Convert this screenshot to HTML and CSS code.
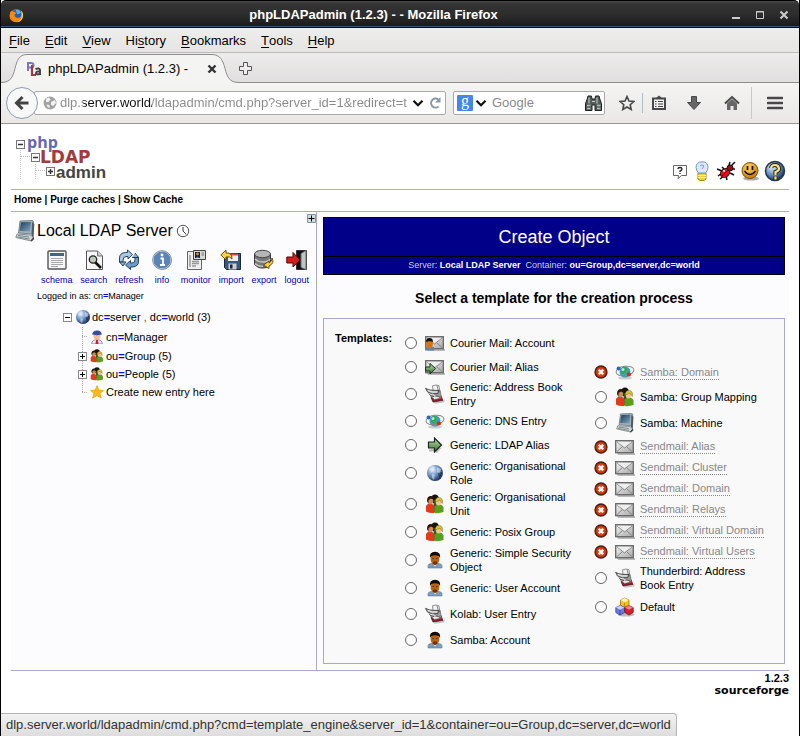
FILE: index.html
```html
<!DOCTYPE html>
<html lang="en">
<head>
<meta charset="utf-8">
<title>phpLDAPadmin (1.2.3) -</title>
<link rel="stylesheet" href="styles.css">
</head>
<body>
<svg class="sprite" aria-hidden="true">
  <defs>
    <linearGradient id="g-metal" x1="0" y1="0" x2="1" y2="1"><stop offset="0" stop-color="#f4f4f4"/><stop offset="1" stop-color="#a8a8a8"/></linearGradient>
    <linearGradient id="g-green" x1="0" y1="0" x2="0" y2="1"><stop offset="0" stop-color="#c4e0b0"/><stop offset="1" stop-color="#2f6e2c"/></linearGradient>
    <radialGradient id="g-globe" cx=".35" cy=".3" r=".75"><stop offset="0" stop-color="#e6f0fa"/><stop offset=".5" stop-color="#6d93c4"/><stop offset="1" stop-color="#172c52"/></radialGradient>
    <radialGradient id="g-red" cx=".5" cy=".5" r=".5"><stop offset="0" stop-color="#f06a3a"/><stop offset=".7" stop-color="#d8380c"/><stop offset="1" stop-color="#a82000"/></radialGradient>
    <linearGradient id="g-screen" x1="0" y1="0" x2="1" y2="1"><stop offset="0" stop-color="#1d3c58"/><stop offset="1" stop-color="#7fa6c4"/></linearGradient>
    <radialGradient id="g-smile" cx=".4" cy=".3" r=".7"><stop offset="0" stop-color="#ffd860"/><stop offset="1" stop-color="#c87c0c"/></radialGradient>
  </defs>
  <symbol id="i-mail" viewBox="0 0 20 16">
    <path d="M2 14h18v2H3z" fill="#bbb"/><rect x=".7" y="1.700" width="17.600" height="12" fill="url(#g-metal)" stroke="#666" stroke-width="1.300"/>
    <path d="M1.500 2.500l8 6.500 8-6.500M1.500 13l6-5.500M17.500 13l-6-5.500" fill="none" stroke="#888"/><path d="M2.500 3h14l-7 5z" fill="#eee"/>
  </symbol>
  <symbol id="i-person" viewBox="0 0 16 18">
    <path d="M1 17v-2.500q0-1.500 3-2h8q3 .5 3 2V17z" fill="#7c9aba" stroke="#5f7fa4" stroke-width=".6"/>
    <path d="M6 13h4l-2 2.500z" fill="#e8eef4"/><ellipse cx="8" cy="8" rx="4.400" ry="6" fill="#b8620e"/>
    <path d="M3 7Q2 1 8 .8 14 1 13 7L11.800 5Q8 3.500 4.200 5z" fill="#0c0c0c"/><path d="M6 11q2-1.500 4 0v2q-2 1.500-4 0z" fill="#6a3608"/><path d="M5.500 7.500h1.500M9 7.500h1.500" stroke="#5a2c04"/>
  </symbol>
  <symbol id="i-mailperson" viewBox="0 0 20 16"><use href="#i-mail" width="20" height="16"/><rect y="12" width="9" height="3.500" fill="#5d84b4"/><ellipse cx="4.500" cy="9" rx="3.300" ry="4.500" fill="#d8720e"/><path d="M1 7q0-4 3.500-4T8 7L4.500 6z" fill="#111"/></symbol>
  <symbol id="i-arrow" viewBox="0 0 16 16"><path d="M2 12.500v2h7v2l6-6z" fill="#bbb"/><path d="M1.500 5h6V1l7 7-7 7v-4h-6z" fill="url(#g-green)" stroke="#17251a" stroke-width="1.200"/></symbol>
  <symbol id="i-mailarrow" viewBox="0 0 20 16"><use href="#i-mail" width="20" height="16"/><path d="M.6 8H5V4.500l5.500 5L5 15v-3H.6z" fill="url(#g-green)" stroke="#17301a"/></symbol>
  <symbol id="i-book" viewBox="0 0 20 20">
    <path d="M8 18.500l9-1 3-2.500-1 3.500-9 1.200z" fill="#c4c4c4"/>
    <path d="M6 13.500l10-2 1.800 5L8 18z" fill="#8a2030" stroke="#3d0912" stroke-width=".7"/><path d="M5 11.500l8 1 3.500 1.500-7 1.500z" fill="#e8e8e8" stroke="#666" stroke-width=".6"/>
    <path d="M9 5.500l6 .5 1.500 8-7-3.500z" fill="#9c9c9c" stroke="#555" stroke-width=".6"/>
    <path d="M7.500 1.800q4-1.600 6.500 0l.8 6L8 6.500z" fill="#f2f2f2" stroke="#666" stroke-width=".7"/><path d="M12 1.500l1.500 6" stroke="#888"/>
    <path d="M.6 4.300q3 2 7.400 2l6 .2-1.200 3Q7 11 2.500 8z" fill="#b4b4b4" stroke="#333" stroke-width=".8"/><path d="M3 6.500q4 2.200 9 1.500" stroke="#eee" fill="none"/>
    <path d="M4 9.500q1 3 5 3" stroke="#444" fill="none"/><circle cx="15" cy="14" r="1.100" fill="#e33"/>
  </symbol>
  <symbol id="i-net" viewBox="0 0 20 16">
    <ellipse cx="10" cy="14" rx="7" ry="1.600" fill="#ccc"/><circle cx="10" cy="8" r="5.500" fill="#3b9fc2"/><path d="M6 5q2-3 5-2l1 3-2 3-3 1zM11 9l3-1v3l-2 2z" fill="#36a848"/><circle cx="8" cy="5.500" r="1.500" fill="#b4ecc8"/>
    <ellipse cx="10" cy="7" rx="9" ry="4.700" fill="none" stroke="#888" transform="rotate(-8 10 7)"/><circle cx="3.600" cy="4.500" r="2" fill="#2a5fcc"/><circle cx="14" cy="10.500" r="2" fill="#d42a1e"/>
  </symbol>
  <symbol id="i-globe" viewBox="0 0 18 18"><circle cx="9" cy="9" r="8" fill="url(#g-globe)"/><path d="M3 5l3-3 3 1-1 3-3 2zM6 10l3 1-1 5-2-2zM11 3l4 2-1 5-3-2z" fill="#e9f1f8" opacity=".5"/><path d="M12 9l4-1q0 4-3 6z" fill="#122548" opacity=".6"/></symbol>
  <symbol id="i-group" viewBox="0 0 20 20">
    <ellipse cx="10" cy="5" rx="4" ry="4.500" fill="#151515"/><path d="M9 6h4l2 12H8z" fill="#275d2c"/>
    <path d="M1 17.500V12q1-2.500 4-2.500T9.500 12v7q-5 .5-8.500-1.500z" fill="#e03b1c"/><ellipse cx="5.500" cy="6.500" rx="2.800" ry="3.700" fill="#d38a58"/><path d="M2 7Q2 2 6 2t3 4L6 4.500 3.500 6v4z" fill="#2a1408"/>
    <path d="M9.500 19v-6q1-2.500 4.500-2.500t4.500 3V18q-4 1.500-9 1z" fill="#5b9d1c"/><ellipse cx="13.500" cy="8" rx="2.700" ry="3.500" fill="#f2c58c"/><path d="M10.300 8q0-5 4-4.500t3 6L15 6z" fill="#dec53a" stroke="#76620e" stroke-width=".5"/>
  </symbol>
  <symbol id="i-computer" viewBox="0 0 20 22">
    <path d="M5 1l12-.5q1.500 0 1.500 1.500l-1 12-14-1z" fill="#a4b2b8" stroke="#566" stroke-width=".7"/><path d="M6 2.300l10-.3-1 9.500-10.500-.5z" fill="url(#g-screen)"/><path d="M17 2l2.300 2-.8 15-2-4z" fill="#4e5d62"/>
    <path d="M2 14l14 1 2.500 3-2 3L.8 17.500z" fill="#cfd6d6" stroke="#667" stroke-width=".7"/><path d="M3 15.500l11 1.500M2.500 17l12 2" stroke="#788"/><path d="M15.500 20.500l3-3.500.7 2-2.500 2.500z" fill="#444"/>
  </symbol>
  <symbol id="i-cubes" viewBox="0 0 20 20">
    <ellipse cx="11" cy="17.500" rx="8.500" ry="2" fill="#bbb"/><g stroke-width=".7"><path d="M9.500 1L14 3v5l-4.500 2.500L5.500 8V3z" fill="#f5c21e" stroke="#9a6c06"/><path d="M9.500 1L14 3 9.500 5.500 5.500 3z" fill="#fff3a8"/><path d="M9.500 5.500v5" stroke="#a77508"/>
    <path d="M5 8.500l4.500 2v5L5 18l-4.200-2.500v-5z" fill="#6b79e0" stroke="#2a3488"/><path d="M5 8.500l4.500 2L5 12.800l-4.200-2.300z" fill="#c8cefa"/><path d="M5 13v5" stroke="#2a3488"/>
    <path d="M14 8.500l4.200 2v5L14 18l-4.200-2.500v-5z" fill="#d4202c" stroke="#6e0a12"/><path d="M14 8.500l4.200 2-4.200 2.300-4.200-2.300z" fill="#f28288"/></g>
  </symbol>
  <symbol id="i-deny" viewBox="0 0 14 14"><circle cx="7" cy="7" r="6" fill="url(#g-red)" stroke="#4b2014" stroke-width="1.300"/><path d="M4.800 4.800l4.400 4.400m0-4.400L4.800 9.200" stroke="#fff" stroke-width="2.200"/></symbol>
  <symbol id="i-plus" viewBox="0 0 9 9"><rect x=".5" y=".5" width="8" height="8" fill="#fff" stroke="#888"/><path d="M2 4.500h5M4.500 2v5" stroke="#000"/></symbol>
  <symbol id="i-minus" viewBox="0 0 9 9"><rect x=".5" y=".5" width="8" height="8" fill="#fff" stroke="#888"/><path d="M2 4.500h5" stroke="#000"/></symbol>
</svg>

<header class="titlebar">
  <svg class="fox" viewBox="0 0 16 16" aria-hidden="true"><circle cx="8" cy="8" r="7" fill="#e8590c"/><circle cx="8.500" cy="6.500" r="5" fill="#1f62b4"/><path d="M7 2q4-1 6 3L9 7z" fill="#4fb4e8"/><path d="M1.500 4Q3 2.500 4.500 4q3-.5 3 1.500L6 7q0 4 4 3.500 3.500-.5 4-5 2 5-1.500 8T4 14 1.500 4z" fill="#f48a14"/><path d="M13 3q3 3 1.500 7T9 15q5-3 4.500-7z" fill="#ffd23c"/></svg>
  <h1 class="window-title">phpLDAPadmin (1.2.3) - - Mozilla Firefox</h1>
  <div class="window-buttons">
    <button type="button" aria-label="Minimise"><svg viewBox="0 0 10 10"><path d="M1 8h8" stroke="#ccc" stroke-width="2"/></svg></button>
    <button type="button" aria-label="Maximise"><svg viewBox="0 0 10 10"><path d="M1.500 1.500h7v7h-7zM1 2h8" fill="none" stroke="#ccc"/></svg></button>
    <button type="button" aria-label="Close"><svg viewBox="0 0 10 10"><path d="M1.500 1.500l7 7m0-7l-7 7" stroke="#ccc" stroke-width="2"/></svg></button>
  </div>
</header>

<nav class="menubar">
  <button type="button"><u>F</u>ile</button><button type="button"><u>E</u>dit</button><button type="button"><u>V</u>iew</button><button type="button">Hi<u>s</u>tory</button><button type="button"><u>B</u>ookmarks</button><button type="button"><u>T</u>ools</button><button type="button"><u>H</u>elp</button>
</nav>

<div class="tabs">
  <div class="tab">
    <svg class="tab-shape" viewBox="0 0 238 30" aria-hidden="true"><path d="M0 30v-.5c10 0 12-6 14-14S18 1.500 26 1.500h185c8 0 11 6 13 14s4 14 14 14v.5z" fill="#f4f4f3"/><path d="M0 29.500c10 0 12-6 14-14S18 1.500 26 1.500h185c8 0 11 6 13 14s4 14 14 14" fill="none" stroke="#8e8e8e"/></svg>
    <svg class="favicon" viewBox="0 0 16 16" aria-hidden="true"><path d="M2 10V2h3q2.500 0 2.500 2.200T5 6.500H2" fill="none" stroke="#77c" stroke-width="2"/><path d="M6 4v10h4" fill="none" stroke="#a33a3a" stroke-width="2.200"/><path d="M9.500 8q4-1.500 4.500 1v5M14 10.500q-4-.5-4 1.500t4 1" fill="none" stroke="#444" stroke-width="2"/></svg>
    <span class="tab-title">phpLDAPadmin (1.2.3) -</span>
    <button type="button" class="tab-close" aria-label="Close tab"><svg viewBox="0 0 10 10"><path d="M1.500 1.500l7 7m0-7l-7 7" stroke="#333" stroke-width="2.400"/></svg></button>
  </div>
  <button type="button" class="new-tab" aria-label="New tab"><svg viewBox="0 0 13 13"><path d="M4.500.5h4v4h4v4h-4v4h-4v-4h-4v-4h4z" fill="#eee" stroke="#555"/></svg></button>
</div>

<div class="toolbar">
  <button type="button" class="back" aria-label="Back"><svg viewBox="0 0 16 16"><path d="M14.500 8H3M8.500 2L2.500 8l6 6" fill="none" stroke="#444" stroke-width="3"/></svg></button>
  <div class="urlbar">
    <svg class="site" viewBox="0 0 14 14" aria-hidden="true"><circle cx="7" cy="7" r="6.500" fill="#a2a2a2"/><path d="M3 2.500l3-1 1.500 2-2 2.500L3 6zM8 6l4-2 1 3-3 3-2-1zM3.500 8.500l3 .5v3l-2-1z" fill="#f2f2f2"/></svg>
    <input class="address" type="text" aria-label="Address" value="dlp.server.world/ldapadmin/cmd.php?server_id=1&amp;redirect=t">
    <button type="button" class="drop" aria-label="History"><svg viewBox="0 0 10 8"><path d="M1 1.500l4 4 4-4" fill="none" stroke="#111" stroke-width="2"/></svg></button>
    <button type="button" class="reload" aria-label="Reload"><svg viewBox="0 0 12 12"><path d="M9.500 9.500A4.500 4.500 0 1 1 9.300 2.500" fill="none" stroke="#8a98a6" stroke-width="2"/><path d="M11.500 0v5.500H6z" fill="#8a98a6"/></svg></button>
  </div>
  <div class="searchbar">
    <button type="button" class="engine" aria-label="Search engine"><span class="g">g</span><svg class="engine-drop" viewBox="0 0 10 8"><path d="M1 1.500l4 4 4-4" fill="none" stroke="#111" stroke-width="2"/></svg></button>
    <input class="query" type="text" placeholder="Google" aria-label="Search">
    <button type="button" class="binoculars" aria-label="Search"><svg viewBox="0 0 17 16"><path d="M3 1h3.500l.5 3h3l.5-3H14l1 3.500 1.500 4v7H10V10H7v5.500H.5v-7L2 4.500z" fill="#555b58" stroke="#1d2220"/><path d="M4 2.500v6M12 2.500v6M2 10.500h3.500M12 10.500h3.500M2 13.500h3.500M12 13.500h3.500" stroke="#b4beba" stroke-width="1.300"/><path d="M7 6.500h3" stroke="#ccc"/></svg></button>
  </div>
  <button type="button" class="tool star" aria-label="Bookmark"><svg viewBox="0 0 16 16"><path d="M8 1.500l2 4.500 4.800.5-3.600 3.200 1 4.800L8 12l-4.200 2.500 1-4.800L1.200 6.500 6 6z" fill="none" stroke="#484848" stroke-width="1.600"/></svg></button>
  <button type="button" class="tool clip" aria-label="Bookmarks list"><svg viewBox="0 0 16 16"><path d="M2 3.500h12v10.500H2z" fill="none" stroke="#484848" stroke-width="2"/><path d="M4.500 3.500L8 .5l3.500 3z" fill="#484848"/><path d="M4 6.500h1.500M7 6.500h5M4 9h1.500M7 9h5M4 11.500h1.500M7 11.500h5" stroke="#484848" stroke-width="1.200"/></svg></button>
  <button type="button" class="tool" aria-label="Downloads"><svg viewBox="0 0 16 16"><path d="M5.500 1.500h5v6h4L8 14.500l-6.500-7h4z" fill="#666" stroke="#484848"/></svg></button>
  <button type="button" class="tool" aria-label="Home"><svg viewBox="0 0 16 16"><path d="M3 8.500L8 4l5 4.500V15H9.500v-4h-3v4H3z" fill="#666"/><path d="M1 8.500l7-6.500 7 6.500" fill="none" stroke="#484848" stroke-width="2"/></svg></button>
  <button type="button" class="tool menu" aria-label="Open menu"><svg viewBox="0 0 16 14"><path d="M1 2h14M1 7h14M1 12h14" stroke="#484848" stroke-width="2.600" stroke-linecap="round"/></svg></button>
</div>

<main class="page">
  <div class="banner">
    <svg class="logo" viewBox="0 0 92 46" role="img" aria-label="phpLDAPadmin">
      <path d="M4.500 14v30M19.500 28v16M5 20.500h10M20 34.500h10" stroke="#c4c4c4" stroke-dasharray="1 1" fill="none"/>
      <g fill="#fff" stroke="#777"><rect x=".5" y="4.500" width="8" height="8"/><rect x="15.500" y="17.500" width="8" height="8"/><rect x="30.500" y="31.500" width="8" height="8"/></g>
      <path d="M2 8.500h5M17 21.500h5M32 35.500h5M34.500 33v5" stroke="#333" stroke-width="1.500"/>
      <text class="logo-php" x="11" y="12">php</text><text class="logo-ldap" x="24" y="27">LDAP</text><text class="logo-admin" x="40" y="42">admin</text>
    </svg>
    <div class="links">
      <a href="#" aria-label="Support"><svg class="ic16" viewBox="0 0 16 16"><path d="M1.500 2.500h13v10H9.500L6 15.500l.5-3h-5z" fill="#fff" stroke="#666"/><path d="M6 6q0-1.500 2-1.500T10 6Q10 7.500 8 8v1M8 10v1" fill="none" stroke="#222" stroke-width="1.300"/></svg></a>
      <a href="#" aria-label="Suggest"><svg class="ic20" viewBox="0 0 20 20"><path d="M6 12h8v6l-2 1.500H8L6 18z" fill="#f0cf4a" stroke="#ab8712"/><path d="M6 14.500h8M6 16.500h8" stroke="#fff3a8"/><path d="M10 .8q6 .2 6 5.500 0 3-2.500 5.700h-7Q4 9 4 6.300 4 1 10 .8z" fill="#dce9fa" stroke="#7196d2"/><path d="M8 5q2-2.500 4 0l-2 3" fill="none" stroke="#7196d2"/></svg></a>
      <a href="#" aria-label="Report a bug"><svg class="ic20" viewBox="0 0 20 20"><path d="M1 8l5 2M2 15l4-3M6 6l3 3M16 8l3 0M14 12l4 2M10 15l1 4M15 5l4-4M13 4l1-3M4 18l4-3" stroke="#111" stroke-width="1.500"/><ellipse cx="9" cy="12" rx="5" ry="4" transform="rotate(-40 9 12)" fill="#dc1220" stroke="#300"/><circle cx="14" cy="7" r="3" fill="#a20c16" stroke="#200"/><path d="M6 15l7-7" stroke="#500"/><circle cx="8" cy="10" r="1" fill="#fff"/></svg></a>
      <a href="#" aria-label="Donate"><svg class="ic20" viewBox="0 0 20 20"><ellipse cx="11" cy="17.500" rx="8" ry="2" fill="#aaa"/><circle cx="10" cy="9.500" r="8" fill="url(#g-smile)" stroke="#7d5008"/><path d="M7.500 5v4M12.500 5v4" stroke="#201000" stroke-width="1.800"/><path d="M4.500 10q5.500 7 11 0" fill="none" stroke="#201000" stroke-width="1.300"/></svg></a>
      <a href="#" aria-label="Help"><svg class="ic22" viewBox="0 0 22 22"><circle cx="11" cy="11" r="9.500" fill="url(#g-globe)" stroke="#21364e" stroke-width="1.500"/><path d="M7 8q.5-3 4-3t4 3.500Q15 11 11.500 12v3M11.500 16.500v3" fill="none" stroke="#241d08" stroke-width="4"/><path d="M7 8q.5-3 4-3t4 3.500Q15 11 11.500 12v3M11.500 16.500v3" fill="none" stroke="#f8e48c" stroke-width="2.200"/></svg></a>
    </div>
  </div>

  <nav class="crumbs"><a href="#">Home</a> | <a href="#">Purge caches</a> | <a href="#">Show Cache</a></nav>

  <div class="columns">
    <aside class="tree-pane">
      <button type="button" class="expand" aria-label="Expand pane"><svg viewBox="0 0 9 9"><path d="M.5.5h8v8h-8z" fill="#cfdde0" stroke="#8494a0"/><path d="M1.500 4.500h6M4.500 1.500v6" stroke="#000"/></svg></button>
      <h2 class="server"><svg class="ic22" aria-hidden="true"><use href="#i-computer"/></svg><span>Local LDAP Server</span><svg class="clock" viewBox="0 0 14 14" aria-hidden="true"><circle cx="7" cy="7" r="5.700" fill="#fff" stroke="#555"/><path d="M7 3v4l3 3" fill="none" stroke="#333"/><path d="M2.500 12l1.500-1.500M11.500 12L10 10.500" stroke="#888"/></svg></h2>
      <ul class="actions">
        <li><a href="#"><svg viewBox="0 0 22 22"><rect x="2" y="2" width="18" height="18" rx="1" fill="#f7f7f7" stroke="#555" stroke-width="1.400"/><path d="M4 4h14v3H4z" fill="#416492"/><path d="M5 9.500h12M5 11.500h12M5 13.500h12M5 15.500h12M5 17.500h7" stroke="#aaa"/></svg>schema</a></li>
        <li><a href="#"><svg viewBox="0 0 22 22"><path d="M3.500 2h11l5 5v13.500h-16z" fill="#f6f6f6" stroke="#555"/><path d="M14.500 2v5h5" fill="#ccc" stroke="#777"/><path d="M12 13l6 6" stroke="#111" stroke-width="2.600"/><circle cx="10" cy="10.500" r="3.700" fill="#b9cdb9" stroke="#222" stroke-width="1.300"/></svg>search</a></li>
        <li><a href="#"><svg viewBox="0 0 22 22"><g stroke="#17344f" stroke-width=".9"><path d="M1.500 13V9q0-5 6-5.500h2V1l5 4.500L10 10V7.500H8q-3 0-3 4V13z" fill="#a9c8e6"/><path d="M20.500 8v4.500q0 5-6 5.500h-2v2.500L7.500 16l5-4.500V14H14q3 0 3-3.500V8z" fill="#6d9cca"/><path d="M17 4l3.500 4.500H14M1.500 13H8l-3 4z" fill="#88b0d8"/></g></svg>refresh</a></li>
        <li><a href="#"><svg viewBox="0 0 22 22"><circle cx="11.500" cy="11.500" r="9.300" fill="#999"/><circle cx="11" cy="11" r="9" fill="#5c83b4" stroke="#fff"/><circle cx="11" cy="11" r="9.300" fill="none" stroke="#6b84a4"/><path d="M9.500 9.500H12v6.500M9 16h5" fill="none" stroke="#fff" stroke-width="1.800"/><circle cx="11" cy="6" r="1.400" fill="#fff"/></svg>info</a></li>
        <li><a href="#"><svg viewBox="0 0 22 22"><path d="M2.500 2.500h14v18h-14z" fill="#eee" stroke="#666"/><path d="M5 6v12M7 12.500h7M7 14.500h7M7 17h4" stroke="#999" stroke-width="1.500"/><path d="M8.500 1.500h12v9h-12z" fill="#d7d7d7" stroke="#444"/><path d="M10 3h5v6h-5z" fill="#222"/><circle cx="12.500" cy="5" r="1.400" fill="#c88a5a"/><path d="M11 9q1.500-3 3 0z" fill="#5e88c6"/><path d="M16.500 4h2.500M16.500 6h2.500" stroke="#777"/></svg>monitor</a></li>
        <li><a href="#"><svg viewBox="0 0 22 22"><path d="M4.500 4.500h16v16h-14l-2-2z" fill="#38587e" stroke="#17263a"/><path d="M8 5h10v7H8z" fill="#eee"/><path d="M8 4.500h10v2H8z" fill="#cc4a38"/><path d="M8.500 14.500h8v6h-8z" fill="#c9cfd6"/><path d="M10 15.500h2.500v4H10z" fill="#222"/><path d="M.8 6L6 1v3q6-1 6 6-2-3-6-2v3z" fill="#f8d24b" stroke="#6b4c05"/></svg>import</a></li>
        <li><a href="#"><svg viewBox="0 0 22 22"><path d="M1.500 5v10q3 4.500 9 4t7-4V5z" fill="#777" stroke="#333"/><path d="M2 10q3 3 8 3t7-3M2 14.500q3 3 8 3" fill="none" stroke="#c2c2c2" stroke-width="1.500"/><ellipse cx="9.500" cy="5" rx="8" ry="3.700" fill="#b5b5b5" stroke="#444"/><path d="M19 9q3 5-3 8v2.500L10.500 16l5.500-4v2q3-1.500 3-5z" fill="#f4cf48" stroke="#6b4c05"/></svg>export</a></li>
        <li><a href="#"><svg viewBox="0 0 22 22"><path d="M10.500 1.500h10v19h-10z" fill="#101010" stroke="#333"/><path d="M15 4.500l5-3v19l-5-2z" fill="#bfc8be" stroke="#667"/><path d="M.8 8H7V3.500l7 7.500-7 7v-4H.8z" fill="#d41e1e" stroke="#560404"/></svg>logout</a></li>
      </ul>
      <p class="logged">Logged in as: cn<b>=</b>Manager</p>
      <ul class="tree">
        <li class="root"><svg class="box" aria-hidden="true"><use href="#i-minus"/></svg><svg class="ic16 globe" aria-hidden="true"><use href="#i-globe"/></svg><a href="#">dc<b>=</b>server <i>,</i> dc<b>=</b>world (3)</a></li>
        <li class="child first"><span class="twig"></span><svg class="ic14" viewBox="0 0 16 16"><path d="M2 16q0-5 6-5t6 5z" fill="#e6ecf8" stroke="#88a"/><path d="M7 11h2l.8 5H6.200z" fill="#d2202c"/><ellipse cx="8" cy="6.500" rx="4" ry="4.700" fill="#f0bd96"/><path d="M2.500 5Q3 .5 8 .5T13.500 5L8 6z" fill="#384ba4"/></svg><a href="#">cn<b>=</b>Manager</a></li>
        <li class="child"><span class="twig"><svg class="box"><use href="#i-plus"/></svg></span><svg class="ic14"><use href="#i-group"/></svg><a href="#">ou<b>=</b>Group (5)</a></li>
        <li class="child"><span class="twig"><svg class="box"><use href="#i-plus"/></svg></span><svg class="ic14"><use href="#i-group"/></svg><a href="#">ou<b>=</b>People (5)</a></li>
        <li class="child last"><span class="twig"></span><svg class="ic14" viewBox="0 0 16 16"><path d="M8 .8l2 5 5.300.4-4 3.500 1.500 5.300L8 12l-5 3 1.500-5.300L.7 6.200 6 5.800z" fill="#fdb91e" stroke="#f0a41c"/></svg><a href="#">Create new entry here</a></li>
      </ul>
    </aside>

    <section class="content">
      <header class="object-head">
        <h2>Create Object</h2>
        <p>Server: <b>Local LDAP Server</b> &nbsp;Container: <b>ou=Group,dc=server,dc=world</b></p>
      </header>
      <h3>Select a template for the creation process</h3>
      <form class="templates">
        <strong class="legend">Templates:</strong>
        <ul class="options">
          <li class="h24"><input type="radio" name="t" id="t1"><svg class="mail"><use href="#i-mailperson"/></svg><label for="t1">Courier Mail: Account</label></li>
          <li class="h24"><input type="radio" name="t" id="t2"><svg class="mail"><use href="#i-mailarrow"/></svg><label for="t2">Courier Mail: Alias</label></li>
          <li class="h30"><input type="radio" name="t" id="t3"><svg class="ic20"><use href="#i-book"/></svg><label for="t3">Generic: Address Book Entry</label></li>
          <li class="h24"><input type="radio" name="t" id="t4"><svg class="mail"><use href="#i-net"/></svg><label for="t4">Generic: DNS Entry</label></li>
          <li class="h24"><input type="radio" name="t" id="t5"><svg class="ic16"><use href="#i-arrow"/></svg><label for="t5">Generic: LDAP Alias</label></li>
          <li class="h32"><input type="radio" name="t" id="t6"><svg class="ic18"><use href="#i-globe"/></svg><label for="t6">Generic: Organisational Role</label></li>
          <li class="h30"><input type="radio" name="t" id="t7"><svg class="ic20"><use href="#i-group"/></svg><label for="t7">Generic: Organisational Unit</label></li>
          <li class="h26"><input type="radio" name="t" id="t8"><svg class="ic20"><use href="#i-group"/></svg><label for="t8">Generic: Posix Group</label></li>
          <li class="h30"><input type="radio" name="t" id="t9"><svg class="ic18"><use href="#i-person"/></svg><label for="t9">Generic: Simple Security Object</label></li>
          <li class="h26"><input type="radio" name="t" id="t10"><svg class="ic18"><use href="#i-person"/></svg><label for="t10">Generic: User Account</label></li>
          <li class="h26"><input type="radio" name="t" id="t11"><svg class="ic20"><use href="#i-book"/></svg><label for="t11">Kolab: User Entry</label></li>
          <li class="h26"><input type="radio" name="t" id="t12"><svg class="ic18"><use href="#i-person"/></svg><label for="t12">Samba: Account</label></li>
        </ul>
        <ul class="options second">
          <li class="h24"><svg class="deny"><use href="#i-deny"/></svg><svg class="mail"><use href="#i-net"/></svg><span class="off">Samba: Domain</span></li>
          <li class="h26"><input type="radio" name="t" id="t13"><svg class="ic20"><use href="#i-group"/></svg><label for="t13">Samba: Group Mapping</label></li>
          <li class="h26"><input type="radio" name="t" id="t14"><svg class="ic20"><use href="#i-computer"/></svg><label for="t14">Samba: Machine</label></li>
          <li class="h21"><svg class="deny"><use href="#i-deny"/></svg><svg class="mail"><use href="#i-mail"/></svg><span class="off">Sendmail: Alias</span></li>
          <li class="h21"><svg class="deny"><use href="#i-deny"/></svg><svg class="mail"><use href="#i-mail"/></svg><span class="off">Sendmail: Cluster</span></li>
          <li class="h21"><svg class="deny"><use href="#i-deny"/></svg><svg class="mail"><use href="#i-mail"/></svg><span class="off">Sendmail: Domain</span></li>
          <li class="h21"><svg class="deny"><use href="#i-deny"/></svg><svg class="mail"><use href="#i-mail"/></svg><span class="off">Sendmail: Relays</span></li>
          <li class="h21"><svg class="deny"><use href="#i-deny"/></svg><svg class="mail"><use href="#i-mail"/></svg><span class="off">Sendmail: Virtual Domain</span></li>
          <li class="h21"><svg class="deny"><use href="#i-deny"/></svg><svg class="mail"><use href="#i-mail"/></svg><span class="off">Sendmail: Virtual Users</span></li>
          <li class="h32"><input type="radio" name="t" id="t15"><svg class="ic20"><use href="#i-book"/></svg><label for="t15">Thunderbird: Address Book Entry</label></li>
          <li class="h26"><input type="radio" name="t" id="t16"><svg class="ic20"><use href="#i-cubes"/></svg><label for="t16">Default</label></li>
        </ul>
      </form>
    </section>
  </div>

  <footer class="foot"><span>1.2.3</span><a href="#" class="sf">sourceforge</a></footer>
</main>
<div class="status">dlp.server.world/ldapadmin/cmd.php?cmd=template_engine&amp;server_id=1&amp;container=ou=Group,dc=server,dc=world</div>
</body>
</html>
```
FILE: styles.css
```css
* { box-sizing: border-box; }
body {
  margin: 0;
  min-height: 100vh;
  display: flex;
  flex-direction: column;
  position: relative;
  border: 1px solid #000;
  border-top: 0;
  background: #fff;
  color: #000;
  font: 13px/16px "Liberation Sans", Arial, sans-serif;
}
button { border: 0; padding: 0; background: none; font: inherit; color: inherit; display: flex; align-items: center; justify-content: center; }
ul, h1, h2, h3, p { margin: 0; padding: 0; list-style: none; }
a { color: inherit; text-decoration: none; }
svg { display: block; flex: none; }
.sprite { position: absolute; width: 0; height: 0; }

/* window chrome */
.titlebar {
  height: 28px;
  display: flex;
  align-items: center;
  padding: 2px 10px 0 8px;
  background: linear-gradient(#4a4a4a, #333 3px, #2e2e2e 50%, #191919);
  border-top: 1px solid #000;
  border-bottom: 1px solid #000;
  box-shadow: inset 0 -1px #3d5678;
  border-radius: 5px 5px 0 0;
}
.fox { width: 15px; height: 15px; }
.window-title { flex: 1; text-align: center; color: #fff; font-size: 13px; line-height: 16px; padding-right: 8px; }
.window-buttons { display: flex; gap: 14px; }
.window-buttons svg { width: 10px; height: 10px; }
.menubar { height: 25px; display: flex; gap: 15px; padding: 2px 8px 0; background: linear-gradient(#ededec, #e6e5e4); border-bottom: 1px solid #bcbcbc; }
.menubar u { text-underline-offset: 2px; }
.tabs { height: 30px; display: flex; background: linear-gradient(#edecec, #e0dfde); box-shadow: inset 0 -1px #8e8e8e; }
.tab { position: relative; width: 238px; display: flex; align-items: center; padding: 2px 22px 0 25px; }
.tab-shape { position: absolute; left: 0; top: 0; width: 238px; height: 30px; }
.favicon { position: relative; width: 16px; height: 16px; margin-right: 6px; }
.tab-title { position: relative; flex: 1; white-space: nowrap; }
.tab-close { position: relative; }
.tab-close svg { width: 10px; height: 10px; }
.new-tab svg { width: 13px; height: 13px; }
.toolbar { height: 41px; display: flex; align-items: center; padding: 0 14px 0 5px; background: linear-gradient(#f4f4f3, #e9e8e7); border-bottom: 1px solid #999; }
.back { width: 32px; height: 32px; border: 1px solid #8f9caa; border-radius: 50%; background: #f8f8f8; z-index: 1; }
.back svg { width: 16px; height: 16px; }
.urlbar, .searchbar { height: 24px; display: flex; align-items: center; background: #fff; border: 1px solid #aaa; border-radius: 2px; }
.urlbar { flex: 1; min-width: 0; margin-left: -4px; padding: 0 4px 0 8px; gap: 3px; }
.site { width: 14px; height: 14px; }
.address, .query { flex: 1; min-width: 0; width: 0; border: 0; padding: 0; outline: 0; font: inherit; height: 16px; }
.address { color: transparent; background: linear-gradient(90deg, #8a8a8a 23px, #111 23px 92px, #8a8a8a 92px); -webkit-background-clip: text; background-clip: text; }
.drop svg, .engine-drop { width: 12px; height: 9px; }
.reload { margin-left: 2px; }
.reload svg { width: 12px; height: 12px; }
.searchbar { width: 152px; margin: 0 12px 0 7px; padding: 0 2px 0 3px; }
.engine { gap: 2px; }
.g { width: 16px; height: 16px; background: #4585f0; color: #fff; border-radius: 1px; font: 16px/12px "Liberation Serif", serif; }
.query { padding-left: 5px; background: none; }
.query::placeholder { color: #8a8a8a; opacity: 1; }
.binoculars svg { width: 17px; height: 16px; }
.tool { width: 38px; height: 32px; }
.tool svg { width: 16px; height: 16px; }
.star { width: 26px; height: 20px; border-right: 1px solid #b4bcc4; padding-right: 6px; }
.clip { width: 32px; }
.menu { width: 34px; border-left: 1px solid #c4cad0; padding-left: 12px; }

/* page */
.page { flex: 1; padding: 12px 10px 40px; border-bottom: 2px solid #e8e8e8; }
.banner { display: flex; justify-content: space-between; align-items: flex-end; padding: 0 3px 7px; }
.logo { width: 92px; height: 46px; margin-left: 2px; }
.logo text { font-weight: bold; }
.logo .logo-php { fill: #6666b4; font-family: "Open Sans", sans-serif; font-size: 16px; }
.logo .logo-ldap { fill: #a03c3c; font-family: "DejaVu Sans", sans-serif; font-size: 17px; }
.logo .logo-admin { fill: #444; font-family: "Liberation Sans Narrow", "Liberation Sans", sans-serif; font-size: 17px; }
.links { display: flex; align-items: center; gap: 4px; }
.ic14 { width: 14px; height: 14px; }
.ic16 { width: 16px; height: 16px; }
.ic18 { width: 18px; height: 18px; }
.ic20 { width: 20px; height: 20px; }
.ic22 { width: 22px; height: 22px; }
.crumbs { border-top: 1px solid #a9a9c9; border-bottom: 1px solid #a9a9c9; padding: 3px 3px; height: 23px; font-size: 10px; line-height: 13px; font-weight: bold; }
.columns { display: grid; grid-template-columns: 306fr 472fr; background: #fcfcff; border-bottom: 1px solid #a9a9c9; }
.tree-pane { position: relative; border-right: 1px solid #a9a9c9; padding: 7px 0 0 3px; }
.expand { position: absolute; right: 0; top: 2px; }
.expand svg { width: 9px; height: 9px; }
.server { display: flex; align-items: center; font-size: 16px; line-height: 24px; font-weight: normal; gap: 1px; }
.clock { width: 14px; height: 14px; margin-left: 2px; }
.actions { display: flex; justify-content: space-between; padding: 6px 7px 0 27px; color: #00a; font-size: 9px; line-height: 12px; }
.actions a { display: flex; flex-direction: column; align-items: center; gap: 3px; }
.actions svg { width: 22px; height: 22px; }
.logged { padding: 4px 0 0 23px; font-size: 9px; line-height: 12px; }
.logged b, .tree b { color: #00f; font-weight: bold; }
.tree { padding: 5px 0 0 49px; font-size: 11px; line-height: 14px; }
.tree i { color: #f00; font-style: normal; }
.tree li { display: flex; align-items: center; }
.root { height: 20px; }
.box { width: 9px; height: 9px; }
.globe { margin: 0 1px 0 3px; }
.child { height: 18px; padding-left: 15px; }
.child a { margin-left: 2px; }
.twig { width: 9px; align-self: stretch; display: flex; align-items: center; background: repeating-linear-gradient(#aaa 0 1px, transparent 1px 2px) 4px 0 / 1px 100% no-repeat, repeating-linear-gradient(90deg, #aaa 0 1px, transparent 1px 2px) 4px 9px / 5px 1px no-repeat; }
.child .ic14 { margin-left: 3px; }
.first { height: 20px; }
.last .twig { background-size: 1px 9px, 5px 1px; }

.content { padding: 5px 4px 6px 6px; min-width: 0; }
.object-head { border: 1px solid #000; background: #000088; color: #fff; text-align: center; }
.object-head h2 { font-size: 18px; line-height: 38px; font-weight: normal; border-bottom: 1px solid #000; }
.object-head p { font-size: 9px; line-height: 17px; color: #ccd; }
.object-head b { color: #fff; }
.content h3 { font-size: 14px; line-height: 16px; text-align: center; margin: 15px 0 12px; }
.templates { display: grid; grid-template-columns: 67px 1fr 1fr; align-items: center; background: #f9f9f9; border: 1px solid #a9a9c9; padding: 12px 2px 10px 11px; font-size: 11px; line-height: 14px; }
.legend { align-self: start; }
.options li { display: grid; grid-template-columns: 18px 26px 1fr; align-items: center; justify-items: center; gap: 2px; padding-right: 14px; }
.options label, .off { justify-self: start; }
.second { padding-bottom: 4px; }
.options input { appearance: none; margin: 0; width: 12px; height: 12px; border: 1px solid #666; border-radius: 50%; background: #fff; }
.options input:checked { background: radial-gradient(#222 3px, #fff 4px); }
.off { color: #888; border-bottom: 1px dotted #888; }
.deny { width: 14px; height: 14px; }
.mail { width: 20px; height: 16px; }
.h21 { min-height: 21px; }
.h24 { min-height: 24px; }
.h26 { min-height: 26px; }
.h30 { min-height: 30px; }
.h32 { min-height: 32px; }
.foot { display: flex; flex-direction: column; align-items: flex-end; font-size: 11px; line-height: 14px; font-weight: bold; }
.sf { font: bold 11px/12px "DejaVu Sans", sans-serif; }
.status { position: absolute; left: 0; bottom: 2px; height: 24px; padding: 3px 5px; background: linear-gradient(#f2f2f2, #dcdcdc); border: 1px solid #b4b4b4; border-left: 0; border-bottom: 0; border-radius: 0 4px 0 0; color: #333; white-space: nowrap; }
```
